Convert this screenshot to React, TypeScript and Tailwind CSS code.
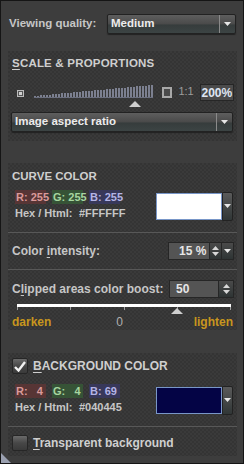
import React from 'react'

const checker = "bg-[repeating-conic-gradient(#3a3a3a_0_25%,#343434_0_50%)] bg-[length:4px_4px]"

function Arrow({ className = '' }: { className?: string }) {
  return (
    <svg width="7" height="4" viewBox="0 0 7 4" className={className}>
      <path d="M0 0H7L3.5 4Z" fill="#e6e6e6" />
    </svg>
  )
}

function UpDown() {
  return (
    <svg width="7" height="12" viewBox="0 0 7 12">
      <path d="M0 5H7L3.5 1Z" fill="#d8d8d8" />
      <path d="M0 7H7L3.5 11Z" fill="#d8d8d8" />
    </svg>
  )
}

function Dropdown({ label, width }: { label: string; width: string }) {
  return (
    <div className={`${width} h-[20px] flex rounded-[2px] border border-[#222] bg-[linear-gradient(#5e5e5e,#4a4a4a_50%,#363c3c_55%,#3c4444)] shadow-[0_1px_1px_#222]`}>
      <div className="flex-1 flex items-center pl-[3px] text-[#ececec] text-[11.5px]">{label}</div>
      <div className="w-[16px] flex items-center justify-center border-l border-[#8a8a8a]">
        <Arrow />
      </div>
    </div>
  )
}

function Channels({ r, g, b }: { r: string; g: string; b: string }) {
  return (
    <div className="flex gap-[6px] h-[14px] items-center">
      <span className="w-[31px] h-[14px] pl-[1px] flex items-center bg-[#573535] text-[#d99a9a] whitespace-pre">R:{r}</span>
      <span className="w-[31px] h-[14px] pl-[1px] flex items-center bg-[#365336] text-[#a6d6a0] whitespace-pre">G:{g}</span>
      <span className="w-[31px] h-[14px] pl-[1px] flex items-center bg-[#38385a] text-[#b4b4e6] whitespace-pre">B:{b}</span>
    </div>
  )
}

function ColorBlock({ r, g, b, hex, swatch }: { r: string; g: string; b: string; hex: string; swatch: string }) {
  return (
    <div className="flex items-start">
      <div className="flex flex-col pl-[3px] gap-[2px] w-[145px]">
        <Channels r={r} g={g} b={b} />
        <div className="flex h-[14px] items-center">
          <span className="w-[64px]">Hex / Html:</span>
          <span>{hex}</span>
        </div>
      </div>
      <div className="flex mt-[2px]">
        <div className={`w-[66px] h-[27px] mt-[1px] border border-[#7896c8] ${swatch}`} />
        <div className="w-[11px] h-[29px] flex items-start justify-center pt-[11px] rounded-r-[2px] bg-[linear-gradient(#5a5a5a,#303636)] border border-[#222]">
          <Arrow />
        </div>
      </div>
    </div>
  )
}

function Check({ checked }: { checked: boolean }) {
  return (
    <div className="w-[16px] h-[16px] rounded-[2px] border border-[#262626] bg-[linear-gradient(#6a6a6a,#474747_50%,#3a3a3a)] flex items-center justify-center">
      {checked && (
        <svg width="12" height="11" viewBox="0 0 12 11">
          <path d="M1 6L4.5 9.5L11 1" stroke="#f2f2f2" strokeWidth="2.4" fill="none" />
        </svg>
      )}
    </div>
  )
}

export default function App() {
  const bars = Array.from({ length: 40 }, (_, i) => i)

  return (
    <div
      className="w-[244px] h-[464px] bg-[#3d3d3d] border border-[#151515] relative overflow-hidden text-[11px] font-bold text-[#c6c6c6] leading-none"
      style={{ fontFamily: '"Liberation Sans", Arial, sans-serif' }}
    >
      <div className="flex items-center mt-[13px] pl-[8px]">
        <span className="w-[98px] text-[11.5px]">Viewing quality:</span>
        <Dropdown label="Medium" width="w-[129px]" />
      </div>

      {/* scale & proportions */}
      <div className={`${checker} ml-[7px] w-[229px] h-[90px] mt-[17px] px-[3px] pt-[7px]`}>
        <div className="pl-[1px] h-[10px] text-[#cfcfcf] text-[11.5px] tracking-[0.2px]"><span className="underline underline-offset-2">S</span>CALE &amp; PROPORTIONS</div>
        <div className="flex items-end h-[19px] mt-[14px] relative">
          <div className="w-[7px] h-[7px] ml-[6px] mb-[4px] border border-[#bbb] bg-[#555] flex items-center justify-center">
            <div className="w-[3px] h-[3px] bg-[#d0d0d0]" />
          </div>
          <div className="flex items-end h-[12px] ml-[10px] w-[119px] gap-[1px] mb-[3px] border-b border-[#6c7080]">
            {bars.map(i => (
              <div key={i} className="w-[2px] bg-[#7c8090]" style={{ height: `${1 + Math.round(i * 11 / 39)}px` }} />
            ))}
          </div>
          <svg width="12" height="6" viewBox="0 0 12 6" className="absolute left-[118px] top-[19px]">
            <path d="M0 6H12L6 0Z" fill="#cfcfcf" />
          </svg>
          <div className="w-[11px] h-[11px] ml-[9px] mb-[3px] border-2 border-[#a8a8a8] bg-[#4a4a4a]" />
          <span className="ml-[6px] mb-[4px] text-[#9c9c9c] font-normal">1:1</span>
          <div className="ml-[6px] w-[36px] h-[17px] border border-[#262626] bg-[#4b4b4b] flex items-center justify-center text-[#dfe6f2] text-[12px]">200%</div>
        </div>
        <div className="mt-[11px]">
          <Dropdown label="Image aspect ratio" width="w-[222px]" />
        </div>
      </div>

      {/* curve color */}
      <div className={`${checker} ml-[7px] w-[229px] h-[167px] mt-[22px]`}>
        <div className="pl-[4px] pt-[8px] pr-[4px]">
          <div className="h-[10px] text-[#cfcfcf] text-[11.5px]">CURVE COLOR</div>
          <div className="mt-[9px]">
            <ColorBlock r=" 255" g=" 255" b=" 255" hex="#FFFFFF" swatch="bg-white" />
          </div>
        </div>
        <div className="mt-[11px] border-t border-[#585858]" />
        <div className="flex items-center justify-between pl-[4px] pr-[3px] mt-[9px] h-[18px]">
          <span className="text-[12px]">Color <span className="underline underline-offset-2">i</span>ntensity:</span>
          <div className="flex h-[18px] border border-[#262626]">
            <div className="w-[40px] bg-[#545454] flex items-center pl-[10px] text-[#e6e6e6] text-[12px]">15 %</div>
            <div className="w-[12px] bg-[linear-gradient(#4a4a4a,#2e3434)] flex items-center justify-center border-l border-[#262626]"><UpDown /></div>
            <div className="w-[12px] bg-[linear-gradient(#4a4a4a,#2e3434)] flex items-center justify-center border-l border-[#262626]"><Arrow /></div>
          </div>
        </div>
        <div className="mt-[9px] border-t border-[#585858]" />
        <div className="flex items-center justify-between pl-[4px] pr-[3px] mt-[10px] h-[18px]">
          <span className="text-[12px]">C<span className="underline underline-offset-2">l</span>ipped areas color boost:</span>
          <div className="flex h-[18px] border border-[#262626]">
            <div className="w-[48px] bg-[#545454] flex items-center pl-[6px] text-[#e6e6e6] text-[12px]">50</div>
            <div className="w-[15px] bg-[linear-gradient(#4a4a4a,#2e3434)] flex items-center justify-center border-l border-[#262626]"><UpDown /></div>
          </div>
        </div>
        <div className="relative ml-[9px] w-[214px] mt-[6px] h-[11px]">
          <div className="h-[3px] bg-white" />
          <div className="flex justify-between">
            {[0, 1, 2, 3, 4].map(i => (
              <div key={i} className="w-[1px] h-[3px] bg-[#9a9a9a]" />
            ))}
          </div>
          <svg width="12" height="6" viewBox="0 0 12 6" className="absolute left-[154px] top-[4px]">
            <path d="M0 6H12L6 0Z" fill="#cfcfcf" />
          </svg>
        </div>
        <div className="flex justify-between pl-[4px] pr-[4px] mt-[1px] text-[#c8961e] text-[12px]">
          <span>darken</span>
          <span className="text-[#b0b0b0] font-normal -ml-[6px]">0</span>
          <span>lighten</span>
        </div>
      </div>

      {/* background color */}
      <div className={`${checker} ml-[7px] w-[229px] h-[103px] mt-[23px]`}>
        <div className="flex items-center gap-[5px] pl-[4px] pt-[5px]">
          <Check checked />
          <span className="text-[12px] text-[#cfcfcf]"><span className="underline underline-offset-2">B</span>ACKGROUND COLOR</span>
        </div>
        <div className="pl-[4px] pr-[4px] mt-[10px]">
          <ColorBlock r="   4" g="   4" b=" 69" hex="#040445" swatch="bg-[#040445]" />
        </div>
        <div className="mt-[11px] border-t border-[#585858]" />
        <div className="flex items-center gap-[5px] pl-[4px] pt-[8px]">
          <Check checked={false} />
          <span className="text-[12px] text-[#cfcfcf]"><span className="underline underline-offset-2">T</span>ransparent background</span>
        </div>
      </div>

      <svg width="10" height="10" viewBox="0 0 10 10" className="absolute left-0 bottom-0">
        <path d="M0 0L10 10H0Z" fill="#9aa0b0" />
      </svg>
    </div>
  )
}
